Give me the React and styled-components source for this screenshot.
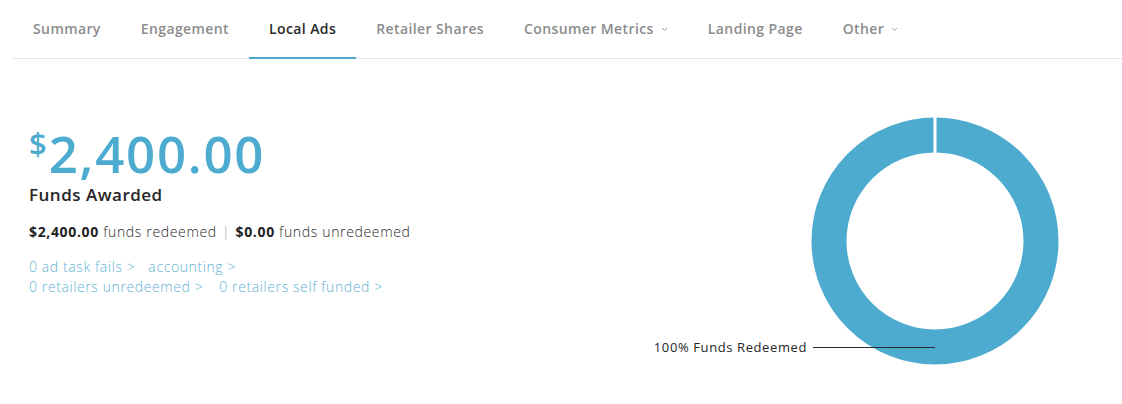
import React from 'react';
import styled, { createGlobalStyle } from 'styled-components';

const GlobalStyle = createGlobalStyle`
    body {
        margin: 0;
        background: #fff;
        font-family: "Open Sans", "Liberation Sans", sans-serif;
        color: #2b2b2b;
    }
`

const blue = '#4dabcf'

const Page = styled.div`
    width: 1122px;
    height: 404px;
    overflow: hidden;
`

const TabBar = styled.nav`
    display: flex;
    margin-left: 13px;
    height: 58px;
    border-bottom: 1px solid #e3e3e3;
`

const Tab = styled.div`
    display: flex;
    align-items: center;
    padding: 0 20px;
    font-size: 14px;
    font-weight: 600;
    letter-spacing: 0.4px;
    color: ${props => props.active ? '#2a2a2a' : '#8c8c8c'};
    border-bottom: 2px solid ${props => props.active ? blue : 'transparent'};
    margin-bottom: -1px;
    cursor: pointer;
    svg{
        margin-left: 7px;
        margin-top: 1px;
    }
`

const Main = styled.div`
    display: flex;
    justify-content: space-between;
    padding: 0 61px 0 29px;
`

const Summary = styled.div`
    padding-top: 68px;
`

const BigAmount = styled.div`
    display: flex;
    align-items: flex-start;
    color: ${blue};
    font-weight: 600;
    font-size: 51px;
    line-height: 52px;
    letter-spacing: 1.7px;
    sup{
        font-size: 31px;
        line-height: 31px;
        margin-top: 1px;
        margin-right: 2px;
        letter-spacing: 0;
    }
`

const Title = styled.div`
    font-size: 17px;
    font-weight: 600;
    letter-spacing: 0.5px;
    color: #262626;
    margin-top: 4px;
`

const Totals = styled.div`
    font-size: 14px;
    font-weight: 300;
    letter-spacing: 0.65px;
    margin-top: 16px;
    color: #2a2a2a;
    b{ font-weight: 700; color: #1f1f1f; }
    span{ color: #b09aa6; margin: 0 1px; }
`

const LinkRow = styled.div`
    display: flex;
    gap: 13px;
    margin-top: ${props => props.first ? '16px' : '0'};
    line-height: 20px;
    a{
        font-size: 14px;
        font-weight: 300;
        letter-spacing: 0.6px;
        color: #5fb2d4;
        text-decoration: none;
    }
    a + a{ margin-left: ${props => props.wide ? '3px' : '0'}; }
`

const ChartWrap = styled.div`
    position: relative;
    margin-top: 58px;
    width: 250px;
    height: 250px;
`

const Legend = styled.div`
    position: absolute;
    right: 126px;
    top: 221px;
    display: flex;
    align-items: center;
    gap: 6px;
    font-size: 13px;
    font-weight: 500;
    letter-spacing: 0.6px;
    color: #262626;
    white-space: nowrap;
    i{
        display: block;
        width: 122px;
        height: 1px;
        background: #2a2a2a;
    }
`

const Chevron = () => (
    <svg width="7" height="5" viewBox="0 0 7 5">
        <path d="M1 1 L3.5 3.5 L6 1" fill="none" stroke="#9a9a9a" strokeWidth="1" />
    </svg>
)

const tabs = [
    { name: 'Summary' },
    { name: 'Engagement' },
    { name: 'Local Ads', active: true },
    { name: 'Retailer Shares' },
    { name: 'Consumer Metrics', menu: true },
    { name: 'Landing Page' },
    { name: 'Other', menu: true },
]

const Donut = () => (
    <svg width="250" height="250" viewBox="0 0 250 250">
        <circle cx="124" cy="124" r="106" fill="none" stroke={blue} strokeWidth="35" />
        <rect x="122.5" y="0" width="3" height="37" fill="#fff" />
    </svg>
)

const App = () => (
    <Page>
        <GlobalStyle />
        <TabBar>
            {tabs.map(t => (
                <Tab key={t.name} active={t.active}>
                    {t.name}
                    {t.menu && <Chevron />}
                </Tab>
            ))}
        </TabBar>
        <Main>
            <Summary>
                <BigAmount><sup>$</sup>2,400.00</BigAmount>
                <Title>Funds Awarded</Title>
                <Totals>
                    <b>$2,400.00</b> funds redeemed <span>|</span> <b>$0.00</b> funds unredeemed
                </Totals>
                <LinkRow first>
                    <a href="#">0 ad task fails &gt;</a>
                    <a href="#">accounting &gt;</a>
                </LinkRow>
                <LinkRow wide>
                    <a href="#">0 retailers unredeemed &gt;</a>
                    <a href="#">0 retailers self funded &gt;</a>
                </LinkRow>
            </Summary>
            <ChartWrap>
                <Donut />
                <Legend>100% Funds Redeemed <i /></Legend>
            </ChartWrap>
        </Main>
    </Page>
)

export default App
